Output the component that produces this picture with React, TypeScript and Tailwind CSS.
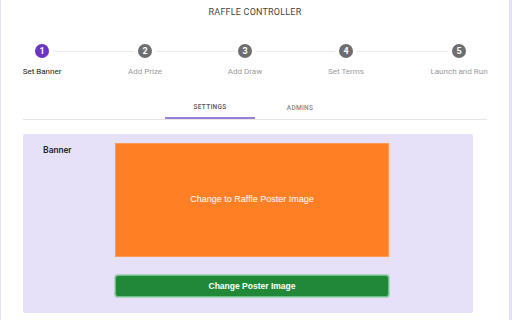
import React from "react";

const steps = [
  { n: 1, label: "Set Banner", w: "w-[84px]", active: true, first: true, last: false },
  { n: 2, label: "Add Prize", w: "w-[122px]", active: false, first: false, last: false },
  { n: 3, label: "Add Draw", w: "w-[78px]", active: false, first: false, last: false },
  { n: 4, label: "Set Terms", w: "w-[124px]", active: false, first: false, last: false },
  { n: 5, label: "Launch and Run", w: "w-[102px]", active: false, first: false, last: true },
];

export default function App() {
  return (
    <div className="w-[512px] h-[320px] overflow-hidden bg-[#e6e1f7] flex">
      <div
        className="ml-[1px] w-[508px] h-[320px] bg-white flex flex-col"
        style={{ fontFamily: "Roboto, 'Liberation Sans', sans-serif" }}
      >
        <div className="pt-[6px] text-center text-[9px] leading-[12px] text-[#444] tracking-[0.2px]">
          RAFFLE CONTROLLER
        </div>

        {/* stepper */}
        <div className="mt-[26px] flex -ml-[1px]">
          {steps.map((s) => (
            <div key={s.n} className={`${s.w} shrink-0 flex flex-col items-center`}>
              <div className="w-full flex items-center h-[14px]">
                <div className={`flex-1 h-px mr-[4px] ${s.first ? "bg-transparent" : "bg-[#ececec]"}`} />
                <div
                  className={`w-[14px] h-[14px] rounded-full flex items-center justify-center text-white text-[9px] font-bold leading-none ${
                    s.active ? "bg-[#6a35c2]" : "bg-[#6e6e6e]"
                  }`}
                >
                  {s.n}
                </div>
                <div className={`flex-1 h-px ml-[4px] ${s.last ? "bg-transparent" : "bg-[#ececec]"}`} />
              </div>
              <div
                className={`mt-[8px] whitespace-nowrap text-[8px] leading-[12px] ${
                  s.active ? "text-[#222]" : "text-[#9a9a9a]"
                }`}
              >
                {s.label}
              </div>
            </div>
          ))}
        </div>

        {/* tabs */}
        <div className="mt-[21px] mx-[22px] border-b border-[#e6e6e6] flex justify-center">
          <div className="w-[90px] h-[20px] flex items-center justify-center text-[6.5px] font-medium text-[#555] tracking-[0.3px] border-b-2 border-[#9a7fd6] -mb-px">
            SETTINGS
          </div>
          <div className="w-[90px] h-[20px] flex items-center justify-center text-[6.5px] font-medium text-[#888] tracking-[0.3px]">
            ADMINS
          </div>
        </div>

        {/* panel */}
        <div className="mt-[14px] ml-[22px] w-[450px] h-[179px] bg-[#e6e0f8] rounded-[2px] flex pt-[9px]">
          <div className="w-[92px] pl-[20px] pt-[1px] text-[9px] leading-[12px] font-medium text-[#222]">
            Banner
          </div>
          <div className="flex flex-col" style={{ fontFamily: "'Liberation Sans', Arial, sans-serif" }}>
            <div className="w-[274px] h-[114px] bg-[#ff8024] border border-[#ff9a50] flex items-center justify-center text-white text-[9px]">
              Change to Raffle Poster Image
            </div>
            <div className="mt-[18px] w-[274px] h-[22px] bg-[#218838] rounded-[3px] border border-[#6cc487] shadow-[0_0_0_1px_rgba(72,180,97,0.35)] flex items-center justify-center text-white text-[8.5px] font-bold">
              Change Poster Image
            </div>
          </div>
        </div>
      </div>
    </div>
  );
}
